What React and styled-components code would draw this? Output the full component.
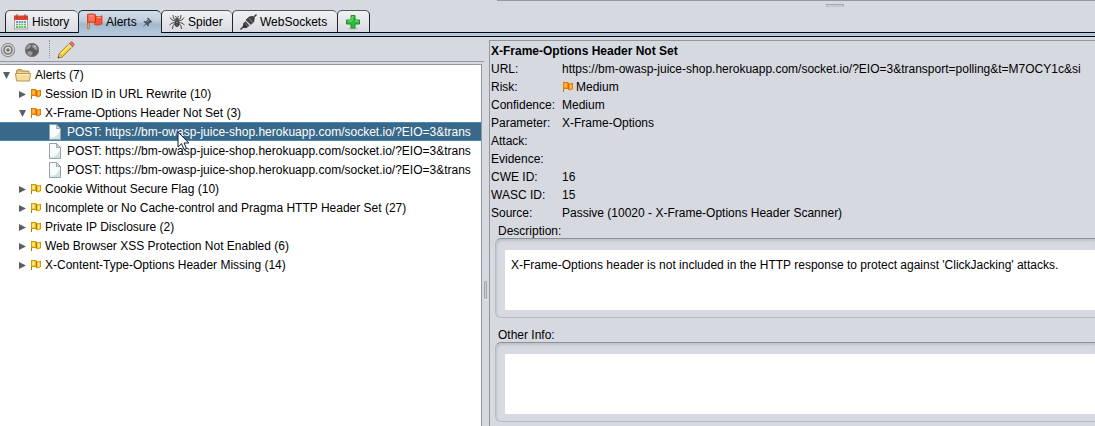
import React from "react";
import styled, { createGlobalStyle, css } from "styled-components";

const Global = createGlobalStyle`
  *, *::before, *::after { box-sizing: border-box; }
  body {
    margin: 0;
    background: #d6d9e0;
    color: #000;
    font-family: "Liberation Sans", Arial, sans-serif;
    font-size: 12px;
    line-height: 18px;
  }
`;

const Page = styled.div`
  height: 100vh;
  display: flex;
  flex-direction: column;
  overflow: hidden;
`;

const TopStrip = styled.div`
  height: 10px;
  flex: none;
  margin-left: 497px;
  border-top: 1px solid #9297a1;
  padding: 3px 0 0 329px;
`;

const Grip = styled.div`
  width: ${(p) => (p.$vertical ? 3 : 18)}px;
  height: ${(p) => (p.$vertical ? 18 : 3)}px;
  border: 1px solid #a3a7af;
  border-radius: 1px;
  background: #c9ccd4;
  ${(p) => !p.$vertical && css`border-bottom-color: #c1c4cc;`}
  ${(p) => p.$vertical && css`box-shadow: 0 1px 0 #eceef2;`}
`;

const TabBar = styled.div`
  display: flex;
  align-items: flex-start;
  flex: none;
  padding-left: 5px;
  height: 22px;
`;

const Tab = styled.button`
  display: flex;
  align-items: center;
  gap: 3px;
  width: ${(p) => p.$width}px;
  height: 22px;
  padding: 0 0 0 7px;
  border: 1px solid #56595f;
  border-left-color: #22242a;
  border-bottom: 0;
  border-right: 0;
  border-radius: 5px 5px 0 0;
  background: linear-gradient(#f0f1f3, #e3e5e9 55%, #d9dbe1);
  color: #000;
  font: inherit;
  text-align: left;
  white-space: nowrap;
  &:last-child { border-right: 1px solid #22242a; }
  ${(p) =>
    p.$active &&
    css`
      position: relative;
      height: 23px;
      padding-bottom: 1px;
      border-color: #14283c;
      background: linear-gradient(#d3dde8, #bfcddb 45%, #a2b8cd 60%, #b4c8dc);
    `}
  svg { flex: none; }
  span + svg { margin-left: 3px; }
`;

const TabRule = styled.div`
  height: 5px;
  flex: none;
  border-top: 1px solid #05070f;
  border-bottom: 1px solid #05070f;
  background: #b4c8dc;
`;

const Split = styled.div`
  display: grid;
  grid-template-columns: 482px 7px minmax(0, 1fr);
  flex: 1;
  min-height: 0;
`;

const TreePane = styled.section`
  display: flex;
  flex-direction: column;
  min-width: 0;
  min-height: 0;
`;

const Toolbar = styled.div`
  display: flex;
  align-items: center;
  height: 25px;
  flex: none;
  border-bottom: 1px solid #9297a1;
  margin-right: -2px;
`;

const ToolButton = styled.button`
  display: flex;
  align-items: center;
  justify-content: center;
  width: 24px;
  height: 24px;
  padding: 2px 8px 0 0;
  border: 0;
  background: none;
  svg { flex: none; }
`;

const ToolSeparator = styled.div`
  height: 18px;
  border-left: 1px dotted #8d9199;
  margin: 0 8px 0 1px;
`;

const Tree = styled.ul`
  flex: 1;
  margin: 2px 0 0;
  padding: 0;
  list-style: none;
  background: #fff;
  border-top: 1px solid #9297a1;
  border-right: 1px solid #9297a1;
  overflow: hidden;
`;

const TreeRow = styled.li`
  display: flex;
  align-items: center;
  height: 19px;
  padding-top: 1px;
  padding-left: ${(p) => [2, 18, 48][p.$level]}px;
  white-space: nowrap;
  ${(p) =>
    p.$selected &&
    css`
      background: #39698a;
      box-shadow: inset 0 1px #4f86b4, inset 0 -1px #4f86b4;
      color: #fff;
    `}
  svg { flex: none; }
`;

const RowIcon = styled.span`
  display: flex;
  width: ${(p) => p.$width}px;
  flex: none;
`;

const Splitter = styled.div`
  display: flex;
  justify-content: center;
  padding-top: 244px;
`;

const DetailPane = styled.section`
  margin-top: 3px;
  border-top: 1px solid #9297a1;
  border-left: 1px solid #9297a1;
  overflow: hidden;
`;

const Title = styled.h1`
  margin: 0;
  padding: 1px 0 0 1px;
  font-size: 12px;
  line-height: 18px;
  font-weight: bold;
`;

const Facts = styled.dl`
  display: grid;
  grid-template-columns: 71px minmax(0, 1fr);
  margin: 0;
  padding-left: 1px;
`;

const Term = styled.dt`
  height: 18px;
  white-space: nowrap;
`;

const Value = styled.dd`
  display: flex;
  align-items: center;
  gap: 2px;
  height: 18px;
  margin: 0;
  white-space: nowrap;
`;

const Field = styled.div`
  padding: 0 0 8px 5px;
`;

const FieldLabel = styled.label`
  display: block;
  height: 16px;
  line-height: 18px;
  padding-left: 3px;
`;

const Inset = styled.div`
  padding: 11px 0 7px 9px;
  height: 80px;
  border: 1px solid #b7bac1;
  border-top-color: #8d9199;
  border-right: 0;
  border-radius: 6px 0 0 6px;
  box-shadow: inset 1px 2px 2px #bfc2c9;
`;

const TextBox = styled.textarea`
  display: block;
  width: 100%;
  height: 60px;
  padding: 6px;
  border: 0;
  outline: 0;
  border-radius: 0;
  resize: none;
  background: #fff;
  color: #000;
  font: inherit;
  overflow: hidden;
`;

const Pointer = styled.svg`
  position: absolute;
  left: 177px;
  top: 131px;
  pointer-events: none;
`;

const CalendarIcon = () => (
  <svg width="16" height="16" viewBox="0 0 16 16">
    <rect x="1.5" y="2.5" width="13" height="12.5" fill="#f4f6f4" stroke="#9ea3a0" />
    <rect x="1" y="1.5" width="14" height="4.5" fill="#e0412b" />
    <path d="M4 0.5v3M12 0.5v3" stroke="#7b3a33" strokeWidth="2" />
    <path d="M4 0.5v2M12 0.5v2" stroke="#e9c7c2" strokeWidth="0.8" />
    <rect x="3" y="7" width="10" height="2" fill="#6f96d2" />
    <rect x="3" y="9" width="10" height="5" fill="#63b95c" />
    <path d="M3 9.5h10M3 11.5h10M5.500 7v7M8 7v7M10.500 7v7" stroke="#f4f8f2" strokeWidth="0.7" />
  </svg>
);

const RedFlagIcon = () => (
  <svg width="17" height="17" viewBox="0 0 17 17">
    <path d="M1.500 1.500h2v14.500h-2z" fill="#d9a76b" stroke="#a56a34" strokeWidth="0.6" />
    <path d="M1.500 1.500C4 .7 7 .7 9.500 1.500V3.300c2 .8 4.500.6 6.500-.6v8.300c-2 1.200-5 1.400-7.500.5V9.800C6.500 9 4 9 1.500 9.800z" fill="#f45536" stroke="#d63522" strokeWidth="0.8" />
    <path d="M2.500 2.300c2-.5 4-.5 6 0v6.200c-2-.6-4-.6-6 0z" fill="#fb7358" />
    <path d="M3 3c1.500-.4 3-.4 4.500 0M11 4.500c1.500.3 3 .1 4-.5" stroke="#ffb09a" fill="none" />
    <path d="M9.500 3.300v6.500" stroke="#c9301e" />
  </svg>
);

const PinIcon = () => (
  <svg width="10" height="10" viewBox="0 0 10 10">
    <path d="M5 .5L9.500 5l-1 .6-1-.2-1.700 1.700.1 1.600-.8.8-2-2.200L.7 9.500l-.4-.4L2.700 6.700.5 4.800l.8-.7 1.700.1L4.600 2.500 4.300 1.300z" fill="#4b555f" />
    <path d="M4 4.800l2-2" stroke="#aebbc6" strokeWidth="0.9" />
  </svg>
);

const SpiderIcon = () => (
  <svg width="16" height="16" viewBox="0 0 16 16">
    <g fill="none" stroke="#4c4c4c" strokeWidth="1">
      <path d="M7 6L4.500 4.500 4 1M9 6l2.500-1.500L12 1M6.500 7L3 6 1 3.500M9.500 7L13 6l2-2.500M6.500 8.500L3 9l-2.500 2M9.500 8.500L13 9l2.500 2M7 9l-3 2.500-.5 3.500M9 9l3 2.500.5 3.500" />
    </g>
    <ellipse cx="8" cy="9.500" rx="2.400" ry="3.400" fill="#424242" />
    <circle cx="8" cy="5.500" r="1.900" fill="#555" />
    <path d="M7.300 3.500L6.500 2M8.700 3.500L9.500 2" stroke="#333" />
    <path d="M7 8.500h2M7.500 11h1" stroke="#999" strokeWidth="0.8" />
  </svg>
);

const PlugIcon = () => (
  <svg width="17" height="16" viewBox="0 0 17 16">
    <path d="M0.500 15.500L4.500 11.500M12.500 4.500L16.500.5" stroke="#3d3d3d" strokeWidth="1.500" />
    <path d="M3.500 9.500L5.500 7.500l3.500 4-2 2-3.500.2z" fill="#333" stroke="#222" strokeWidth="0.600" />
    <path d="M6 6L9 3l3.500-.7 1.700 2-.4 3.400L11 10.500z" fill="#454545" stroke="#222" strokeWidth="0.600" />
    <path d="M4.500 8.700l3.500 4M8.500 3.700l4 4.700" stroke="#8c8c8c" strokeWidth="0.900" />
    <path d="M5.500 7l4.300 4.500" stroke="#b5b5b5" strokeWidth="0.600" />
  </svg>
);

const PlusIcon = () => (
  <svg width="16" height="16" viewBox="0 0 16 16">
    <ellipse cx="8" cy="14.500" rx="5" ry="1" fill="#b7bcb8" />
    <path d="M6 1.500h4v4.500h4.500v4h-4.500v4H6v-4H1.500V6H6z" fill="#2eba3c" stroke="#189425" strokeLinejoin="round" />
    <path d="M7 2.800h2M2.700 7h4.300V2.800M10 7H13.500" stroke="#7be27e" fill="none" />
  </svg>
);

const TargetIcon = () => (
  <svg width="16" height="16" viewBox="0 0 16 16">
    <circle cx="8" cy="8" r="7" fill="#777" />
    <circle cx="8" cy="8" r="5.500" fill="none" stroke="#d7d7d7" strokeWidth="1.400" />
    <circle cx="8" cy="8" r="2.500" fill="none" stroke="#e1e1e1" strokeWidth="1.300" />
  </svg>
);

const GlobeIcon = () => (
  <svg width="16" height="16" viewBox="0 0 16 16">
    <circle cx="8" cy="8" r="7" fill="#5c5c5c" />
    <circle cx="8" cy="8" r="6.500" fill="none" stroke="#7d7d7d" />
    <path d="M2.500 5l3-2.500 2 .5-.5 2L4.500 7 2 7.500zM8.500 2.500l3 .5 2 3.500-1 2L10.500 7 8 5zM3.500 9.500l3-.5L9 11l-1.500 2.500-2 .3-2-2z" fill="#999" />
    <path d="M9.500 4.500l2-1 .7 2z" fill="#ccc" />
  </svg>
);

const PencilIcon = () => (
  <svg width="18" height="18" viewBox="0 0 18 18">
    <path d="M1 17l1.300-4.500L12.500 2.300l3.200 3.200L5.500 15.700z" fill="#fbcf2c" stroke="#a56f18" strokeWidth="0.900" />
    <path d="M4 13L13.500 3.500" stroke="#fff08c" strokeWidth="1.300" />
    <path d="M12.300 2.500l1.500-1.300q1-.7 1.800.1l1.100 1.100q.9.900.1 1.900l-1.300 1.400z" fill="#e8736c" stroke="#ab4845" strokeWidth="0.700" />
    <path d="M11.500 3.500l3 3" stroke="#ddd" strokeWidth="1.200" />
    <path d="M1 17l1.300-4.300 3 3z" fill="#eed7a7" stroke="#8a6a35" strokeWidth="0.500" />
    <path d="M1 17l.6-1.900 1.400 1.300z" fill="#333" />
  </svg>
);

const FlagIcon = ({ tone }) => {
  const c = tone === "medium"
    ? { fill: "#ff9a10", edge: "#e27a04", dark: "#cf6a00", light: "#ffc253" }
    : { fill: "#f7cb2a", edge: "#cf9a08", dark: "#a87800", light: "#fff0a0" };
  return (
    <svg width="12" height="12" viewBox="0 0 12 12">
      <path d="M1.500 1v10" stroke={c.dark} />
      <path d="M1.500 1.500h4.500v6H1.500z" fill={c.fill} stroke={c.edge} />
      <path d="M6.500 2.500c1.300.5 2.700.3 4-.5v6c-1.300.9-2.700 1-4 .5z" fill={c.fill} stroke={c.edge} />
      <path d="M2.500 2.500h2v3.500h-2zM8 3.800h1.500v3.200H8z" fill={c.light} />
      <path d="M6.500 2v6.500" stroke={c.dark} />
    </svg>
  );
};

const FolderIcon = () => (
  <svg width="16" height="14" viewBox="0 0 16 14">
    <path d="M1.500 12.500v-10l1-1h4l1 1.500h6l.5.500v9z" fill="#dcb767" stroke="#b3914b" />
    <path d="M2.500 4.500h11v2h-11z" fill="#fff6d5" />
    <path d="M.5 5.500h15l-1 7.500h-13z" fill="#f5dc9a" stroke="#b8964d" />
    <path d="M1.500 6.500h13" stroke="#fff3cb" />
  </svg>
);

const FileIcon = () => (
  <svg width="14" height="16" viewBox="0 0 14 16">
    <path d="M1.500.5h7l4 4v11h-11z" fill="#e6f0f0" stroke="#91a5a8" />
    <path d="M2 1h6v4h4v8H2z" fill="#f7fbfb" />
    <path d="M8.500.5v4h4z" fill="#c7d9db" stroke="#8da2a5" strokeWidth="0.800" />
    <path d="M2 15c5-1 8-4 10-8v8z" fill="#d3e3e4" />
  </svg>
);

const Arrow = ({ open }) => (
  <svg width="9" height="9" viewBox="0 0 9 9">
    <path d={open ? "M1 1h7L4.500 8z" : "M1 1v7l7-3.500z"} fill="#5b5e63" />
  </svg>
);

const host = "https://bm-owasp-juice-shop.herokuapp.com/socket.io/?EIO=3";

const tabs = [
  { label: "History", width: 73, icon: <CalendarIcon /> },
  { label: "Alerts", width: 83, icon: <RedFlagIcon />, active: true },
  { label: "Spider", width: 71, icon: <SpiderIcon /> },
  { label: "WebSockets", width: 105, icon: <PlugIcon /> },
  { label: "", width: 33, icon: <PlusIcon /> },
];

const rows = [
  { level: 0, kind: "folder", open: true, text: "Alerts (7)" },
  { level: 1, kind: "medium", text: "Session ID in URL Rewrite (10)" },
  { level: 1, kind: "medium", open: true, text: "X-Frame-Options Header Not Set (3)" },
  { level: 2, kind: "file", selected: true, text: `POST: ${host}&trans` },
  { level: 2, kind: "file", text: `POST: ${host}&trans` },
  { level: 2, kind: "file", text: `POST: ${host}&trans` },
  { level: 1, kind: "low", text: "Cookie Without Secure Flag (10)" },
  { level: 1, kind: "low", text: "Incomplete or No Cache-control and Pragma HTTP Header Set (27)" },
  { level: 1, kind: "low", text: "Private IP Disclosure (2)" },
  { level: 1, kind: "low", text: "Web Browser XSS Protection Not Enabled (6)" },
  { level: 1, kind: "low", text: "X-Content-Type-Options Header Missing (14)" },
];

const facts = [
  ["URL:", `${host}&transport=polling&t=M7OCY1c&si`],
  ["Risk:", "Medium"],
  ["Confidence:", "Medium"],
  ["Parameter:", "X-Frame-Options"],
  ["Attack:", ""],
  ["Evidence:", ""],
  ["CWE ID:", "16"],
  ["WASC ID:", "15"],
  ["Source:", "Passive (10020 - X-Frame-Options Header Scanner)"],
];

function rowIcon(kind) {
  if (kind === "folder") return <RowIcon $width={20}><FolderIcon /></RowIcon>;
  if (kind === "file") return <RowIcon $width={19}><FileIcon /></RowIcon>;
  return <RowIcon $width={15}><FlagIcon tone={kind} /></RowIcon>;
}

export default function App() {
  return (
    <>
      <Global />
      <Page>
        <TopStrip><Grip /></TopStrip>
        <TabBar role="tablist">
          {tabs.map((t) => (
            <Tab key={t.width} role="tab" aria-selected={!!t.active} aria-label={t.label || "Add tab"} $width={t.width} $active={t.active}>
              {t.icon}
              {t.label && <span>{t.label}</span>}
              {t.active && <PinIcon />}
            </Tab>
          ))}
        </TabBar>
        <TabRule />
        <Split>
          <TreePane>
            <Toolbar role="toolbar">
              <ToolButton aria-label="Scope"><TargetIcon /></ToolButton>
              <ToolButton aria-label="Sites"><GlobeIcon /></ToolButton>
              <ToolSeparator />
              <ToolButton aria-label="Edit"><PencilIcon /></ToolButton>
            </Toolbar>
            <Tree role="tree">
              {rows.map((r, i) => (
                <TreeRow key={i} role="treeitem" aria-level={r.level + 1} aria-selected={!!r.selected} $level={r.level} $selected={r.selected}>
                  {r.level < 2 && <RowIcon $width={r.level ? 12 : 13}><Arrow open={r.open} /></RowIcon>}
                  {rowIcon(r.kind)}
                  <span>{r.text}</span>
                </TreeRow>
              ))}
            </Tree>
          </TreePane>
          <Splitter><Grip $vertical /></Splitter>
          <DetailPane>
            <Title>X-Frame-Options Header Not Set</Title>
            <Facts>
              {facts.map(([k, v]) => (
                <React.Fragment key={k}>
                  <Term>{k}</Term>
                  <Value>
                    {k === "Risk:" && <FlagIcon tone="medium" />}
                    {v}
                  </Value>
                </React.Fragment>
              ))}
            </Facts>
            <Field>
              <FieldLabel htmlFor="description">Description:</FieldLabel>
              <Inset>
                <TextBox id="description" readOnly defaultValue="X-Frame-Options header is not included in the HTTP response to protect against 'ClickJacking' attacks." />
              </Inset>
            </Field>
            <Field>
              <FieldLabel htmlFor="other-info">Other Info:</FieldLabel>
              <Inset>
                <TextBox id="other-info" readOnly />
              </Inset>
            </Field>
          </DetailPane>
        </Split>
      </Page>
      <Pointer width="13" height="20" viewBox="0 0 13 20" aria-hidden="true">
        <path d="M1 1v15l3.500-3.300L7 18.500l2.500-1L7 12h4.800z" fill="#fff" stroke="#111a33" />
      </Pointer>
    </>
  );
}
